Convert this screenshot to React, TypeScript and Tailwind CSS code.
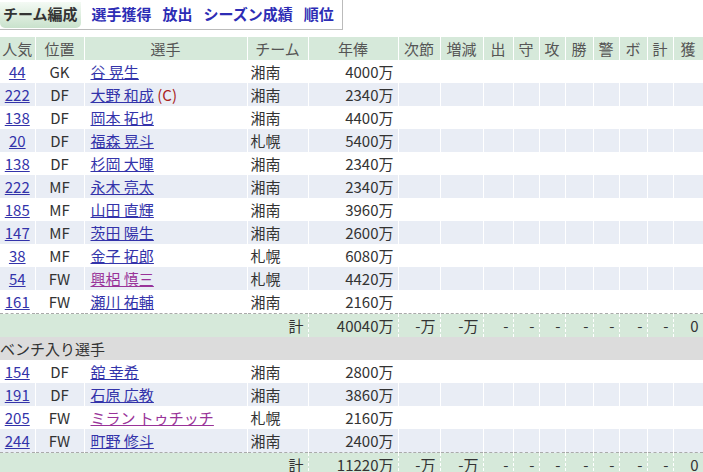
const cols = [35, 49, 163, 61, 90, 42, 43, 30, 26, 26, 28, 26, 28, 26, 30];
const heads = ['人気', '位置', '選手', 'チーム', '年俸', '次節', '増減', '出', '守', '攻', '勝', '警', 'ボ', '計', '獲'];

type P = { pop: number; pos: string; name: string; team: string; sal: string; visited?: boolean; cap?: boolean };

const starters: P[] = [
  { pop: 44, pos: 'GK', name: '谷 晃生', team: '湘南', sal: '4000万' },
  { pop: 222, pos: 'DF', name: '大野 和成', team: '湘南', sal: '2340万', cap: true },
  { pop: 138, pos: 'DF', name: '岡本 拓也', team: '湘南', sal: '4400万' },
  { pop: 20, pos: 'DF', name: '福森 晃斗', team: '札幌', sal: '5400万' },
  { pop: 138, pos: 'DF', name: '杉岡 大暉', team: '湘南', sal: '2340万' },
  { pop: 222, pos: 'MF', name: '永木 亮太', team: '湘南', sal: '2340万' },
  { pop: 185, pos: 'MF', name: '山田 直輝', team: '湘南', sal: '3960万' },
  { pop: 147, pos: 'MF', name: '茨田 陽生', team: '湘南', sal: '2600万' },
  { pop: 38, pos: 'MF', name: '金子 拓郎', team: '札幌', sal: '6080万' },
  { pop: 54, pos: 'FW', name: '興梠 慎三', team: '札幌', sal: '4420万', visited: true },
  { pop: 161, pos: 'FW', name: '瀬川 祐輔', team: '湘南', sal: '2160万' },
];
const bench: P[] = [
  { pop: 154, pos: 'DF', name: '舘 幸希', team: '湘南', sal: '2800万' },
  { pop: 191, pos: 'DF', name: '石原 広教', team: '湘南', sal: '3860万' },
  { pop: 205, pos: 'FW', name: 'ミラン トゥチッチ', team: '札幌', sal: '2160万', visited: true },
  { pop: 244, pos: 'FW', name: '町野 修斗', team: '湘南', sal: '2400万' },
];

function Row({ p, i }: { p: P; i: number }) {
  const bg = i % 2 === 1 ? 'bg-[#e9edf5]' : 'bg-white';
  const td = 'border-r border-white h-[23px] p-0';
  return (
    <tr className={bg}>
      <td className={`${td} text-center`}><a className="text-[#3333aa] underline">{p.pop}</a></td>
      <td className={`${td} text-center`}>{p.pos}</td>
      <td className={`${td} pl-[6px]`}>
        <a className={`underline ${p.visited ? 'text-[#993399]' : 'text-[#3333aa]'}`}>{p.name}</a>
        {p.cap && <span className="text-[#aa2222]"> (C)</span>}
      </td>
      <td className={`${td} pl-[3px]`}>{p.team}</td>
      <td className={`${td} text-right pr-[4px]`}>{p.sal}</td>
      {cols.slice(5).map((_, k) => <td key={k} className={td}></td>)}
    </tr>
  );
}

function Total({ sum }: { sum: string }) {
  const td = 'border-r border-white border-t border-t-[#aaa] border-dashed h-[23px] p-0';
  const rest = ['-万', '-万', '-', '-', '-', '-', '-', '-', '-', '0'];
  return (
    <tr className="bg-[#d6e9da]">
      <td colSpan={4} className={`${td} text-right pr-[4px]`}>計</td>
      <td className={`${td} text-right pr-[4px]`}>{sum}</td>
      {rest.map((v, k) => <td key={k} className={`${td} text-right pr-[4px]`}>{v}</td>)}
    </tr>
  );
}

export default function App() {
  return (
    <div className="w-[703px] h-[472px] overflow-hidden bg-white text-[15px] text-[#333]" style={{ fontFamily: '"Noto Sans CJK JP", "Noto Sans", sans-serif' }}>
      <div className="w-[343px] h-[30px] border border-[#bbb] border-t-0 border-l-0 flex items-center gap-[11px] font-bold whitespace-nowrap text-[15px]">
        <div className="h-[26px] px-[3px] flex items-center rounded-b-[5px] bg-gradient-to-b from-[#f4faf4] to-[#c9e2cc] text-[#333]">チーム編成</div>
        <span className="text-[#2d2db5]">選手獲得</span>
        <span className="text-[#2d2db5]">放出</span>
        <span className="text-[#2d2db5]">シーズン成績</span>
        <span className="text-[#2d2db5]">順位</span>
      </div>
      <table className="mt-[7px] table-fixed border-collapse leading-[23px]" style={{ width: 703 }}>
        <colgroup>{cols.map((w, i) => <col key={i} style={{ width: w }} />)}</colgroup>
        <thead>
          <tr className="bg-[#d6e9da] text-[#555]">
            {heads.map((h, i) => <th key={i} className="font-normal text-center border-r border-white h-[23px] p-0">{h}</th>)}
          </tr>
        </thead>
        <tbody>
          {starters.map((p, i) => <Row key={i} p={p} i={i} />)}
          <Total sum="40040万" />
          <tr className="bg-[#dcdcdc]"><td colSpan={15} className="h-[23px] p-0">ベンチ入り選手</td></tr>
          {bench.map((p, i) => <Row key={i} p={p} i={i} />)}
          <Total sum="11220万" />
        </tbody>
      </table>
    </div>
  );
}
